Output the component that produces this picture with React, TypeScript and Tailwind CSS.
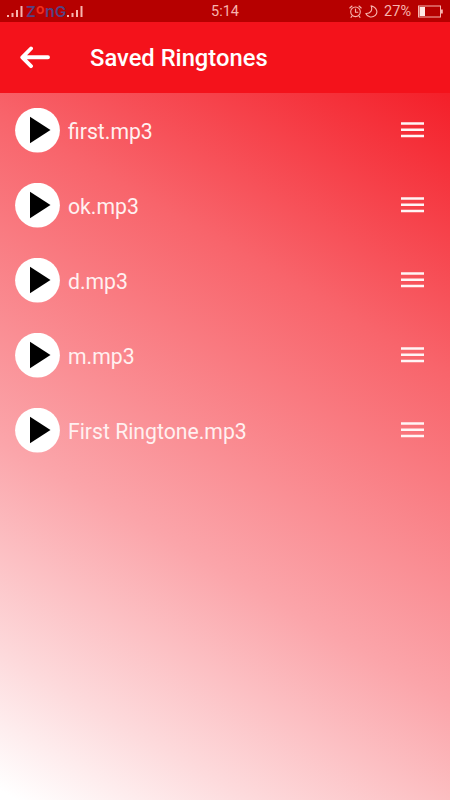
import { useState } from "react";

interface Ringtone {
  id: number;
  name: string;
}

const savedRingtones: Ringtone[] = [
  { id: 1, name: "first.mp3" },
  { id: 2, name: "ok.mp3" },
  { id: 3, name: "d.mp3" },
  { id: 4, name: "m.mp3" },
  { id: 5, name: "First Ringtone.mp3" }
];

export default function App(): React.ReactElement {
  const [playingId, setPlayingId] = useState<number | null>(null);

  return (
    <div className="flex h-[800px] w-[450px] flex-col overflow-hidden bg-white font-['Roboto',sans-serif] text-white">
      <StatusBar />
      <header className="flex h-[70.5px] shrink-0 items-center bg-[#f4121b] pl-5">
        <button aria-label="Back" className="mr-10 flex" type="button">
          <BackArrow />
        </button>
        <h1 className="pt-[3px] text-[23.75px] leading-none font-medium whitespace-nowrap">Saved Ringtones</h1>
      </header>
      <main className="flex-1 bg-[linear-gradient(210deg,#f41f29_0%,#f8646b_29%,#fba5aa_63%,#fddadc_85%,#fff_99%)]">
        <ul>
          {savedRingtones.map((ringtone) => (
            <RingtoneRow
              isPlaying={ringtone.id === playingId}
              key={ringtone.id}
              name={ringtone.name}
              onToggle={() => setPlayingId(ringtone.id === playingId ? null : ringtone.id)}
            />
          ))}
        </ul>
      </main>
    </div>
  );
}

function RingtoneRow({
  isPlaying,
  name,
  onToggle
}: {
  isPlaying: boolean;
  name: string;
  onToggle: () => void;
}): React.ReactElement {
  return (
    <li className="flex h-[75px] items-center pr-[26px] pl-[15px]">
      <button
        aria-label={name}
        aria-pressed={isPlaying}
        className="flex h-[45px] w-[45px] shrink-0 items-center justify-center"
        onClick={onToggle}
        type="button"
      >
        <svg className="h-[45px] w-[45px]" viewBox="0 0 45 45">
          <circle cx="22.5" cy="22.2" fill="#fff" r="22.4" />
          {isPlaying ? <path d="M14 11h6v23h-6zM25 11h6v23h-6z" /> : <path d="M15 8.800v26.500L35.500 22z" />}
        </svg>
      </button>
      <span className="ml-2 flex-1 pt-[3px] text-[21.2px] leading-none whitespace-nowrap text-[#fff0f0]">{name}</span>
      <button aria-label="Options" type="button">
        <svg className="h-4 w-[23px]" fill="#fff5f5" viewBox="0 0 23 16">
          <path d="M0 .2h23v2.500H0zM0 6.500h23v2.500H0zM0 12.800h23v2.500H0z" />
        </svg>
      </button>
    </li>
  );
}

function StatusBar(): React.ReactElement {
  return (
    <div className="grid h-[22px] shrink-0 grid-cols-3 items-center bg-[#b60000] text-[#f7b5ae]">
      <div className="flex items-center pl-[7px]">
        <SignalBars />
        <Carrier />
        <SignalBars />
      </div>
      <span className="pt-[2px] text-center text-[14.5px] leading-none">5:14</span>
      <div className="flex items-center justify-end pr-[7px]">
        <AlarmIcon />
        <MoonIcon />
        <span className="mr-[7px] ml-[6px] pt-[2px] text-[14.5px] leading-none">27%</span>
        <BatteryIcon />
      </div>
    </div>
  );
}

function Carrier(): React.ReactElement {
  return (
    <span className="flex h-[15px] w-[44px] items-center pl-[3px] font-['Inter',sans-serif] leading-none font-semibold text-[#564282]">
      <span className="w-[10px] text-[15px]">Z</span>
      <span className="-mt-[5px] w-[9px] text-[14px] text-[#f0301f]">o</span>
      <span className="w-[10px] text-[16px]">n</span>
      <span className="w-[11px] text-[15px]">G</span>
    </span>
  );
}

function SignalBars(): React.ReactElement {
  return (
    <svg className="mt-px h-[13px] w-4 shrink-0" fill="currentColor" viewBox="0 0 16 13">
      <path d="M0 10h2v2H0zM4.500 8h2v4h-2zM9 5h2v7H9zM13.500 1h2v11h-2z" />
    </svg>
  );
}

function BackArrow(): React.ReactElement {
  return (
    <svg
      className="h-[24px] w-[30px]"
      fill="none"
      stroke="currentColor"
      strokeLinecap="round"
      strokeLinejoin="round"
      strokeWidth="3.9"
      viewBox="0 0 30 24"
    >
      <path d="M28 12.300H2.500M11 3.500L2.300 12.300l8.700 8.800" />
    </svg>
  );
}

function AlarmIcon(): React.ReactElement {
  return (
    <svg className="h-[13px] w-[13px]" fill="none" stroke="currentColor" strokeLinecap="round" strokeWidth="1.1" viewBox="0 0 13 13">
      <circle cx="6.5" cy="6.8" r="4.8" />
      <path d="M6.500 4v3.200h2.300M.8 3L3 1M12.200 3L10 1M3 11l-1 1.300M10 11l1 1.300" />
    </svg>
  );
}

function MoonIcon(): React.ReactElement {
  return (
    <svg
      className="ml-[3px] h-[13px] w-[13px]"
      fill="none"
      stroke="currentColor"
      strokeLinejoin="round"
      strokeWidth="1.1"
      viewBox="0 0 13 13"
    >
      <path d="M6 .8C8 5 5.500 8.800.8 8.500c1.700 4 6.700 4.500 9.500 1.900C13.300 7.500 12 2.500 6 .8z" />
    </svg>
  );
}

function BatteryIcon(): React.ReactElement {
  return (
    <svg className="h-[13px] w-[25px]" viewBox="0 0 25 13">
      <rect fill="none" height="11" stroke="currentColor" width="22" x=".5" y="1" />
      <path d="M1.500 2h5.500v9H1.500z" fill="#ffe9e6" />
      <path d="M23 4.500h1.800v4H23z" fill="currentColor" />
    </svg>
  );
}
